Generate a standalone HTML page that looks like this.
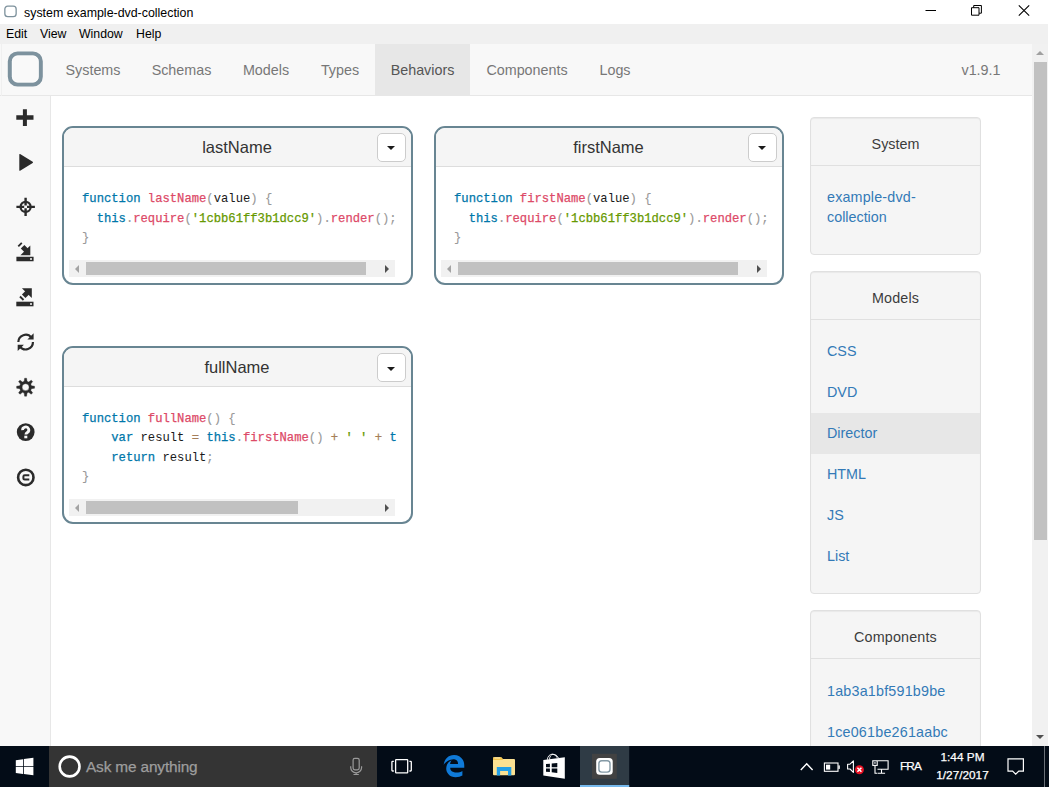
<!DOCTYPE html>
<html>
<head>
<meta charset="utf-8">
<title>system example-dvd-collection</title>
<style>
*{box-sizing:border-box;margin:0;padding:0}
html,body{width:1049px;height:787px;overflow:hidden;background:#fff}
body{position:relative;font-family:"Liberation Sans",Arial,sans-serif;font-size:14px;color:#333}
.abs{position:absolute}
#titlebar{left:0;top:0;width:1049px;height:23px;background:#fff}
#title{left:24px;top:5.500px;font-size:12.4px;color:#000;white-space:nowrap;line-height:15px}
#menubar{left:0;top:23.500px;width:1048px;height:20.500px;background:#f0f0f0}
.menu{top:3.500px;font-size:12.3px;color:#000;line-height:15px;white-space:nowrap}
#navbar{left:0;top:44px;width:1032px;height:52px;background:#f8f8f8;border-bottom:1px solid #e7e7e7}
.nav{top:0;height:51px;line-height:53px;font-size:14.34px;color:#777;white-space:nowrap;text-align:center}
.nav.active{background:#e7e7e7;color:#555}
#sidebar{left:0;top:96px;width:51px;height:650px;background:#f8f8f8;border-right:1px solid #e7e7e7}
.panel{border:2px solid #688592;border-radius:11px;background:#fff;overflow:hidden}
.phead{left:0;top:0;right:0;height:39px;background:#f5f5f5;border-bottom:1px solid #ddd;text-align:center;font-size:16.5px;line-height:38px;color:#333}
.dd{width:29px;height:29px;border:1px solid #ccc;border-radius:5px;background:#fff;right:5px;top:5px}
.dd i{position:absolute;left:9.200px;top:12.400px;width:0;height:0;border-left:4px solid transparent;border-right:4px solid transparent;border-top:4.300px solid #1a1a1a}
pre{position:absolute;left:18.500px;font-family:"Liberation Mono",monospace;font-size:12.2px;line-height:19.5px;color:#1a1a1a;white-space:pre;overflow:hidden}
.k{color:#07a}.f{color:#dd4a68}.s{color:#690}.p{color:#999}.o{color:#a67f59}
.k,.f,.s,.o{-webkit-text-stroke:0.250px currentColor}.p{-webkit-text-stroke:0.100px currentColor}
.sb{left:5.500px;height:17px;width:326px;background:#f1f1f1}
.sb .th{position:absolute;top:2px;height:13px;background:#c1c1c1}
.sb .la{position:absolute;left:6px;top:5px;width:0;height:0;border-top:4px solid transparent;border-bottom:4px solid transparent;border-right:4px solid #a3a3a3}
.sb .ra{position:absolute;right:6px;top:5px;width:0;height:0;border-top:4px solid transparent;border-bottom:4px solid transparent;border-left:4px solid #505050}
.well{background:#f5f5f5;border:1px solid #e0e0e0;border-radius:4px;left:810px;width:171px;box-shadow:inset 0 1px 1px rgba(0,0,0,.05)}
.wh{left:0;right:0;top:0;height:48px;line-height:52px;text-align:center;font-size:14.34px;color:#3c3c3c;border-bottom:1px solid #e0e0e0}
.lk{left:16px;color:#337ab7;font-size:14.34px;line-height:21px;white-space:nowrap}
#vscroll{left:1032px;top:44px;width:16px;height:702px;background:#f1f1f1}
#taskbar{left:0;top:746px;width:1049px;height:41px;background:#030c17}
.tt{white-space:nowrap;-webkit-text-stroke:0.250px currentColor}
</style>
</head>
<body>
<div id="titlebar" class="abs">
  <svg class="abs" style="left:4px;top:5px" width="14" height="14" viewBox="0 0 14 14"><rect x="0.850" y="1.150" width="11.300" height="10.500" rx="2.900" fill="#fff" stroke="#7d919c" stroke-width="1.300"/></svg>
  <div id="title" class="abs">system example-dvd-collection</div>
  <svg class="abs" style="left:920px;top:0" width="129" height="23" viewBox="0 0 129 23">
    <path d="M5.500 10.500h10.500" stroke="#000" stroke-width="1" fill="none"/>
    <path d="M51.500 7.700h7.500v7.500h-7.500zM53.700 7.700v-2.200h7.700v7.700h-2.400" stroke="#000" stroke-width="1" fill="none" stroke-linejoin="round"/>
    <path d="M98.800 5.300l10.400 10.400M109.200 5.300l-10.400 10.400" stroke="#000" stroke-width="1.100" fill="none"/>
  </svg>
</div>
<div id="menubar" class="abs">
  <div class="menu abs" style="left:6px">Edit</div>
  <div class="menu abs" style="left:40px">View</div>
  <div class="menu abs" style="left:79px">Window</div>
  <div class="menu abs" style="left:136px">Help</div>
</div>
<div id="navbar" class="abs">
  <svg class="abs" style="left:0;top:0" width="50" height="51" viewBox="0 44 50 51"><rect x="9.850" y="53.450" width="30.900" height="31.100" rx="7.800" fill="#f9f9f9" stroke="#7d929e" stroke-width="4.100"/><rect x="12.300" y="55.900" width="26" height="26.200" rx="5.400" fill="none" stroke="#fff" stroke-width=".800" opacity=".8"/></svg>
  <div class="nav abs" style="left:50px;width:86px">Systems</div>
  <div class="nav abs" style="left:136px;width:91px">Schemas</div>
  <div class="nav abs" style="left:227px;width:78px">Models</div>
  <div class="nav abs" style="left:305px;width:70px">Types</div>
  <div class="nav abs active" style="left:375px;width:95px">Behaviors</div>
  <div class="nav abs" style="left:470px;width:114px">Components</div>
  <div class="nav abs" style="left:584px;width:62px">Logs</div>
  <div class="nav abs" style="left:961px;width:40px">v1.9.1</div>
</div>
<div class="abs" style="left:1px;top:44px;width:1px;height:702px;background:#f0f0f0"></div>
<div id="sidebar" class="abs">
<svg class="abs" style="left:0;top:0" width="51" height="649" viewBox="0 96 51 649" fill="#2b2b2b">
  <!-- plus -->
  <path d="M22.9 109.2h4v6.1h6.6v4.5h-6.6v6.1h-4v-6.1h-6.6v-4.500h6.6z"/>
  <!-- play -->
  <path d="M19.3 154.6q0-.9.8-.5l12.6 7.7q.7.6 0 1.200l-12.600 7.700q-.8.400-.8-.500z"/>
  <!-- screenshot -->
  <circle cx="25.600" cy="206.900" r="5" fill="none" stroke="#2b2b2b" stroke-width="2.300"/>
  <path d="M24.400 197.700h2.400v7.800h-2.400zM24.400 208.300h2.400v7.800h-2.400zM16.400 205.700h7.800v2.400h-7.800zM27 205.700h7.900v2.400h-7.900z"/>
  <!-- import -->
  <path d="M16.400 256.700h17.200v4.600h-17.200z"/>
  <path d="M30 258.300h2v1.400h-2z" fill="#f8f8f8"/>
  <path d="M30.300 245.400v9.900h-9.900z"/>
  <path d="M22.600 246.800l4.500 4.500" stroke="#2b2b2b" stroke-width="5" fill="none"/>
  <path d="M19.400 244l1.300 1.300" stroke="#2b2b2b" stroke-width="5" fill="none"/>
  <!-- export -->
  <path d="M16.300 301.700h17.200v4.600h-17.200z"/>
  <path d="M30 303.300h2v1.400h-2z" fill="#f8f8f8"/>
  <path d="M21.900 288.200h9.900v9.900z"/>
  <path d="M28 292l-4.300 4.300" stroke="#2b2b2b" stroke-width="5" fill="none"/>
  <path d="M22.400 297.600l-1.300 1.300" stroke="#2b2b2b" stroke-width="5" fill="none"/>
  <!-- refresh -->
  <path d="M18.35 342.10A7.3 7.3 0 0 1 31.40 337.61" fill="none" stroke="#2b2b2b" stroke-width="2.200"/>
  <path d="M33.600 333.200v6.200h-6.200z"/>
  <path d="M32.95 342.10A7.3 7.3 0 0 1 19.90 346.59" fill="none" stroke="#2b2b2b" stroke-width="2.200"/>
  <path d="M17.700 351v-6.200h6.200z"/>
  <!-- cog -->
  <path fill-rule="evenodd" d="M24.17 381.37 L24.61 378.25 L26.59 378.25 L27.03 381.37 L28.71 382.07 L31.23 380.18 L32.62 381.57 L30.73 384.09 L31.43 385.77 L34.55 386.21 L34.55 388.19 L31.43 388.63 L30.73 390.31 L32.62 392.83 L31.23 394.22 L28.71 392.33 L27.03 393.03 L26.59 396.15 L24.61 396.15 L24.17 393.03 L22.49 392.33 L19.97 394.22 L18.58 392.83 L20.47 390.31 L19.77 388.63 L16.65 388.19 L16.65 386.21 L19.77 385.77 L20.47 384.09 L18.58 381.57 L19.97 380.18 L22.49 382.07Z M22.10 387.20 a3.50 3.50 0 1 0 7.00 0 a3.50 3.50 0 1 0 -7.00 0Z" stroke="#2b2b2b" stroke-width="0.4" stroke-linejoin="round"/>
  <!-- question -->
  <circle cx="25.700" cy="432.100" r="8.900"/>
  <path d="M22.600 430.200a3.100 3 0 1 1 4.700 2.300q-1.400.8-1.400 2.100" fill="none" stroke="#f8f8f8" stroke-width="2.800"/>
  <path d="M24.300 435.700h3v2.600h-3z" fill="#f8f8f8"/>
  <!-- copyright -->
  <circle cx="25.800" cy="477.400" r="7.700" fill="none" stroke="#2b2b2b" stroke-width="2.600"/>
  <path d="M29.300 475.300h-4.600q-1.300 0-1.300 1.100v2q0 1.100 1.300 1.100h4.600" fill="none" stroke="#2b2b2b" stroke-width="2"/>
</svg>
</div>

<div class="panel abs" style="left:61.500px;top:126px;width:351px;height:159px">
  <div class="phead abs">lastName<div class="dd abs"><i></i></div></div>
  <pre style="top:62px"><span class="k">function</span> <span class="f">lastName</span><span class="p">(</span>value<span class="p">)</span> <span class="p">{</span>
  <span class="k">this</span><span class="p">.</span><span class="f">require</span><span class="p">(</span><span class="s">'1cbb61ff3b1dcc9'</span><span class="p">).</span><span class="f">render</span><span class="p">();</span>
<span class="p">}</span></pre>
  <div class="sb abs" style="top:131.500px"><i class="la"></i><div class="th" style="left:17px;width:280px"></div><i class="ra"></i></div>
</div>

<div class="panel abs" style="left:433.500px;top:126px;width:350px;height:159px">
  <div class="phead abs">firstName<div class="dd abs"><i></i></div></div>
  <pre style="top:62px"><span class="k">function</span> <span class="f">firstName</span><span class="p">(</span>value<span class="p">)</span> <span class="p">{</span>
  <span class="k">this</span><span class="p">.</span><span class="f">require</span><span class="p">(</span><span class="s">'1cbb61ff3b1dcc9'</span><span class="p">).</span><span class="f">render</span><span class="p">();</span>
<span class="p">}</span></pre>
  <div class="sb abs" style="top:131.500px"><i class="la"></i><div class="th" style="left:17px;width:280px"></div><i class="ra"></i></div>
</div>

<div class="panel abs" style="left:61.500px;top:346.300px;width:351px;height:177.700px">
  <div class="phead abs">fullName<div class="dd abs"><i></i></div></div>
  <pre style="top:61.600px;width:315px"><span class="k">function</span> <span class="f">fullName</span><span class="p">()</span> <span class="p">{</span>
    <span class="k">var</span> result <span class="o">=</span> <span class="k">this</span><span class="p">.</span><span class="f">firstName</span><span class="p">()</span> <span class="o">+</span> <span class="s">' '</span> <span class="o">+</span> <span class="k">this</span><span class="p">.</span><span class="f">lastName</span><span class="p">();</span>
    <span class="k">return</span> result<span class="p">;</span>
<span class="p">}</span></pre>
  <div class="sb abs" style="top:150.800px"><i class="la"></i><div class="th" style="left:17px;width:212px"></div><i class="ra"></i></div>
</div>

<div class="well abs" style="top:116.500px;height:138px">
  <div class="wh abs">System</div>
  <div class="lk abs" style="top:69.400px;line-height:20.500px"><span style="letter-spacing:.17px">example-dvd-</span><br>collection</div>
</div>
<div class="well abs" style="top:271px;height:323px">
  <div class="wh abs" style="letter-spacing:.15px">Models</div>
  <div class="abs" style="left:0;right:0;top:141px;height:41px;background:#e7e7e7"></div>
  <div class="lk abs" style="top:69.400px">CSS</div>
  <div class="lk abs" style="top:110.400px">DVD</div>
  <div class="lk abs" style="top:151.200px">Director</div>
  <div class="lk abs" style="top:192.200px">HTML</div>
  <div class="lk abs" style="top:233.100px">JS</div>
  <div class="lk abs" style="top:274.100px">List</div>
</div>
<div class="well abs" style="top:610px;height:160px">
  <div class="wh abs" style="letter-spacing:.17px">Components</div>
  <div class="lk abs" style="top:69.5px;letter-spacing:.2px">1ab3a1bf591b9be</div>
  <div class="lk abs" style="top:110.5px;letter-spacing:.2px">1ce061be261aabc</div>
</div>

<div id="vscroll" class="abs">
  <div class="abs" style="left:2px;top:17.500px;width:13.200px;height:478.500px;background:#c1c1c1"></div>
  <i class="abs" style="left:4.300px;top:6.800px;width:0;height:0;border-left:4.300px solid transparent;border-right:4.300px solid transparent;border-bottom:4.600px solid #a0a0a0"></i>
  <i class="abs" style="left:4.300px;top:691.200px;width:0;height:0;border-left:4.300px solid transparent;border-right:4.300px solid transparent;border-top:4.600px solid #505050"></i>
</div>
<div id="taskbar" class="abs">
<svg class="abs" style="left:0;top:-1px" width="1049" height="42" viewBox="0 745 1049 42">
  <rect x="49" y="746" width="328" height="41" fill="#343434"/>
  <!-- windows -->
  <g transform="translate(15.800,756.500) scale(0.0393)"><path fill="#fff" d="m0 93.7 183.6-25.3v177.4H0zm0 324.6 183.6 25.3V268.4H0zm203.8 28L448 480V268.400H203.800zm0-380.600v180.100H448V32z"/></g>
  <!-- cortana -->
  <circle cx="69.600" cy="766.500" r="9.900" fill="none" stroke="#fff" stroke-width="2.600"/>
  <!-- mic -->
  <g fill="none" stroke="#9a9a9a" stroke-width="1.200">
    <rect x="353.100" y="758.300" width="6.100" height="11.500" rx="1.700"/>
    <path d="M350.700 766.200v1.400a5.450 5.200 0 0 0 10.900 0v-1.400M356.150 772.800v1.500M353.500 774.500h5.300"/>
  </g>
  <!-- task view -->
  <g fill="none" stroke="#fff" stroke-width="1.300">
    <rect x="395.600" y="759.700" width="12.100" height="13.200" rx=".6"/>
    <path d="M393.800 761.400h-1.200q-.7 0-.7.700v8.200q0 .7.700.7h1.200M409.400 761.400h1.200q.7 0 .7.700v8.200q0 .7-.7.700h-1.200"/>
  </g>
  <!-- edge -->
  <g transform="translate(443.900,754.600) scale(0.0448)"><path fill="#0f7ad8" d="m-6 228.2.4-.5c0 .2 0 .3-.1.5zm460.6 15.5c0-44-7.8-84.5-28.8-122.4C384.8 47.9 312.2 8 227.2 8 87.3 7.7 8.9 113.2-5.6 227.7c42.4-61.3 117.1-121.4 220.4-125 0 0 109.7 0 99.4 105H138.4c6.4-37.4 18.5-59 34.3-78.900-75 34.900-121.800 96.100-120.800 188.300.8 71.500 50.100 144.800 120.800 172 83.400 31.800 192.800 7.200 240.100-21.300V363.400c-80.900 56.500-270.900 60.900-272.300-67.600h314.100z"/></g>
  <!-- explorer -->
  <path d="M493 758.200q0-1 1-1h7.200l1.600 1.800h11.200q1 0 1 1v14.200q0 1-1 1h-20q-1 0-1-1z" fill="#fbe192"/>
  <path d="M493 758.200q0-1 1-1h7.200l1.600 1.800v1h-9.800z" fill="#f2c54e"/>
  <path d="M494.500 758h5.500" stroke="#fff8dc" stroke-width=".800"/>
  <path d="M496.800 767h14.500v8.500h-3.300v-4.600h-7.900v4.600h-3.300z" fill="#23a0e8"/>
  <!-- store -->
  <path d="M543.300 760l21.500-2.700v21.400l-21.500-3.300z" fill="#fff"/>
  <path d="M547.300 759.800q.6-5.300 5.200-5.700q3.400.1 4.800 3.800M549.500 759.500q.3-4.800 3.600-5.200q3.600-.1 5.400 3.600" fill="none" stroke="#fff" stroke-width=".900"/>
  <path d="M546 764.100l3.900-.4v3.600h-3.900zM551.700 763.500l5.600-.6v4.400h-5.600zM546 768.400h3.900v3.700l-3.900-.4zM551.700 768.400h5.600v4.500l-5.600-.6z" fill="#030c17"/>
  <!-- active app -->
  <rect x="580" y="746" width="49.200" height="41" fill="#2f3b45"/>
  <rect x="580" y="785" width="49.200" height="2" fill="#76b9ed"/>
  <rect x="592" y="753.800" width="24.800" height="25" fill="#424242"/>
  <rect x="596.200" y="758" width="16.500" height="16.700" rx="3.500" fill="#fff"/>
  <rect x="598.900" y="760.800" width="11.100" height="11.300" rx="2.800" fill="none" stroke="#8499a5" stroke-width="1.400"/>
  <!-- chevron -->
  <path d="M800.800 770l5.900-6.300 5.900 6.300" fill="none" stroke="#fff" stroke-width="1.400"/>
  <!-- battery -->
  <rect x="824.400" y="763" width="13.600" height="8.300" fill="none" stroke="#fff" stroke-width="1.100"/>
  <rect x="838.400" y="765.400" width="1.400" height="3.500" fill="#fff"/>
  <rect x="826" y="764.700" width="4.200" height="4.900" fill="#fff"/>
  <!-- speaker -->
  <path d="M847.600 764.200h2.400l3.400-3.400v11.600l-3.400-3.400h-2.400z" fill="none" stroke="#fff" stroke-width="1.100" stroke-linejoin="round"/>
  <circle cx="859.400" cy="769.700" r="4.500" fill="#e81123"/>
  <path d="M857.400 767.700l4 4M861.400 767.700l-4 4" stroke="#fff" stroke-width="1.500"/>
  <!-- network -->
  <g fill="none" stroke="#fff" stroke-width="1.100">
    <path d="M877.500 760.800h10.600v8.400h-10.600"/>
    <path d="M881.500 769.200v3.700M877.500 773.200h7.600"/>
    <rect x="872.800" y="760.800" width="4.400" height="4.600"/>
    <path d="M875 765.400v7.800h2"/>
  </g>
  <rect x="874.300" y="762.200" width="1.300" height="1.500" fill="#fff"/>
  <!-- notification -->
  <path d="M1008 758.900h15.400v12.200h-4.600l-3.100 3.100l-3.100-3.100h-4.600z" fill="none" stroke="#fff" stroke-width="1.200"/>
  <rect x="1044" y="746" width="1" height="41" fill="#6a7077"/>
</svg>
<div class="abs tt" id="ask" style="left:86px;top:11.400px;font-size:15.400px;line-height:20px;color:#9d9d9d;letter-spacing:-0.150px">Ask me anything</div>
<div class="abs tt" id="fra" style="left:900px;top:13px;font-size:11.800px;line-height:14px;color:#fff;letter-spacing:-0.900px">FRA</div>
<div class="abs tt" id="time" style="left:932px;width:61px;text-align:center;top:4px;font-size:11.800px;line-height:14px;color:#fff">1:44 PM</div>
<div class="abs tt" id="date" style="left:932px;width:61px;text-align:center;top:22px;font-size:11.800px;line-height:14px;color:#fff">1/27/2017</div>
</div>
</body>
</html>
